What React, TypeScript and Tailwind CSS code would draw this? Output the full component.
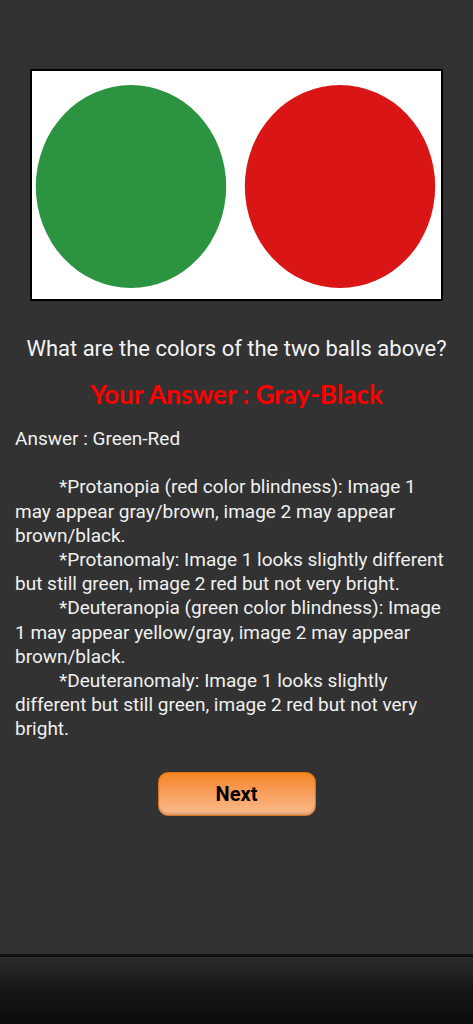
import React from 'react'

const notes = [
  '*Protanopia (red color blindness): Image 1 may appear gray/brown, image 2 may appear brown/black.',
  '*Protanomaly: Image 1 looks slightly different but still green, image 2 red but not very bright.',
  '*Deuteranopia (green color blindness): Image 1 may appear yellow/gray, image 2 may appear brown/black.',
  '*Deuteranomaly: Image 1 looks slightly different but still green, image 2 red but not very bright.',
]

export default function App() {
  return (
    <div
      className="flex h-[1024px] w-[473px] flex-col overflow-hidden bg-[#323232]"
      style={{ fontFamily: 'Roboto, "Noto Sans", sans-serif' }}
    >
      <div className="flex-1">
        {/* picture */}
        <div className="mx-[30px] mt-[69px] h-[232px] border-2 border-black bg-white">
          <svg viewBox="0 0 409 228" className="h-full w-full">
            <ellipse cx="99" cy="115.5" rx="95.2" ry="101.5" fill="#2c9441" />
            <ellipse cx="308" cy="115.5" rx="95.2" ry="101.5" fill="#d91515" />
          </svg>
        </div>

        <div className="mt-[34px] text-center text-[22px] leading-[28px] text-[#f2f2f2]">
          What are the colors of the two balls above?
        </div>

        <div
          className="mt-[15px] text-center text-[26px] font-bold leading-[32px] text-[#ff0000]"
          style={{ fontFamily: 'Lato, sans-serif' }}
        >
          Your Answer : Gray-Black
        </div>

        <div className="mt-[17px] pl-[15px] pr-[25px] text-[19px] leading-[24.2px] text-[#f0f0f0]">
          <div>Answer : Green-Red</div>
          <div className="h-[24.2px]" />
          {notes.map(n => (
            <p key={n} className="indent-[44px]">{n}</p>
          ))}
        </div>

        <div className="mt-[30px] flex justify-center">
          <button className="h-[44px] w-[158px] rounded-[10px] border border-[#d9731a] bg-gradient-to-b from-[#f5841c] to-[#fabb8c] text-[20px] font-bold text-black shadow-[inset_0_-2px_2px_rgba(0,0,0,0.15)]">
            Next
          </button>
        </div>
      </div>

      {/* bottom bar */}
      <div className="h-[70px] border-t-[3px] border-[#101010] bg-gradient-to-b from-[#2c2c2c] via-[#161616] to-[#0b0b0b]" />
    </div>
  )
}
